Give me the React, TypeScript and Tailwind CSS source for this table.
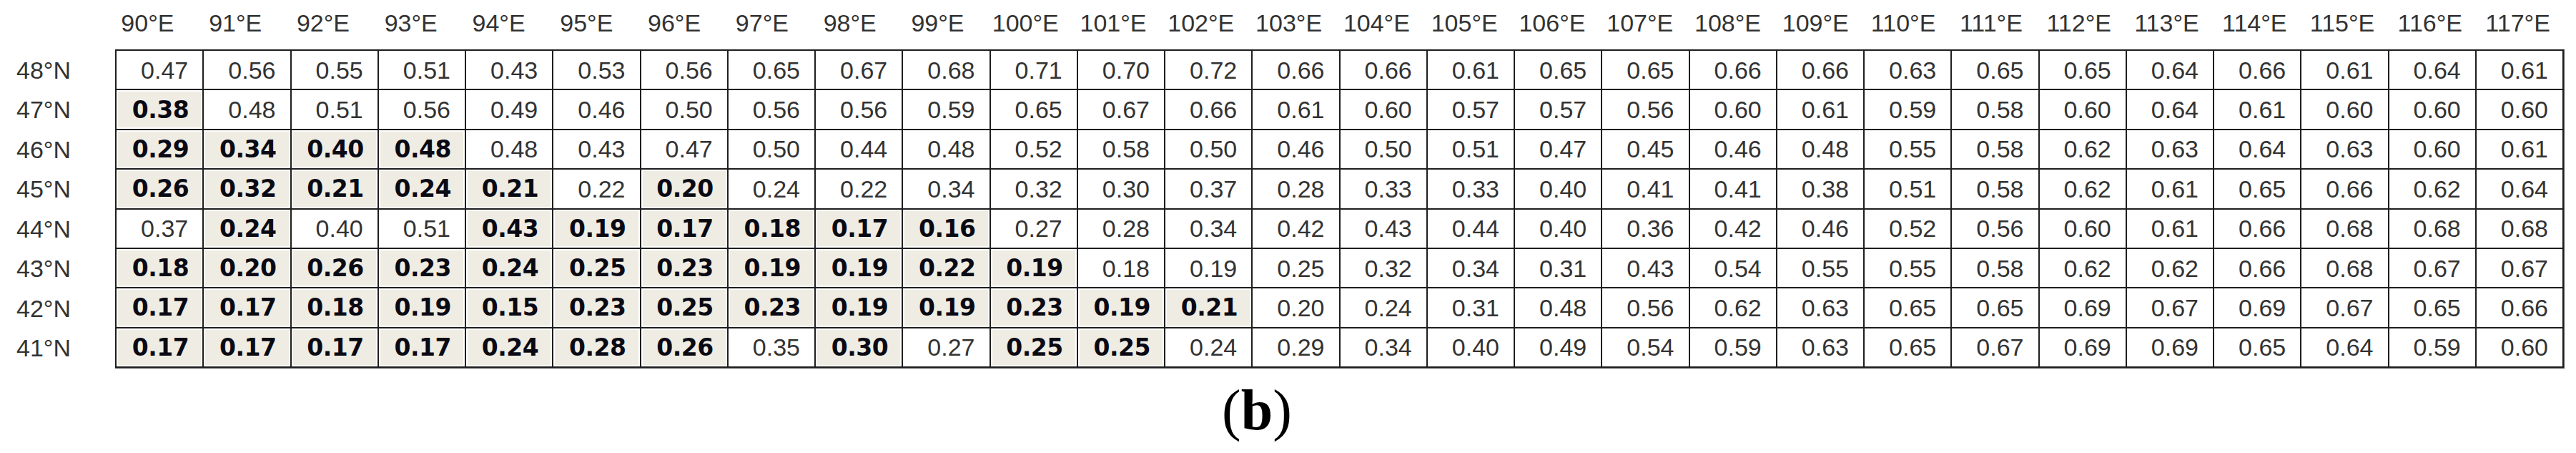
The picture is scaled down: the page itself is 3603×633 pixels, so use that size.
import React from "react";

type Cell = [string, boolean];

const cols = Array.from({ length: 28 }, (_, i) => `${90 + i}°E`);

const raw: { label: string; vals: string; hi: number[] }[] = [
  {
    label: "48°N",
    vals: "0.47 0.56 0.55 0.51 0.43 0.53 0.56 0.65 0.67 0.68 0.71 0.70 0.72 0.66 0.66 0.61 0.65 0.65 0.66 0.66 0.63 0.65 0.65 0.64 0.66 0.61 0.64 0.61",
    hi: [],
  },
  {
    label: "47°N",
    vals: "0.38 0.48 0.51 0.56 0.49 0.46 0.50 0.56 0.56 0.59 0.65 0.67 0.66 0.61 0.60 0.57 0.57 0.56 0.60 0.61 0.59 0.58 0.60 0.64 0.61 0.60 0.60 0.60",
    hi: [0],
  },
  {
    label: "46°N",
    vals: "0.29 0.34 0.40 0.48 0.48 0.43 0.47 0.50 0.44 0.48 0.52 0.58 0.50 0.46 0.50 0.51 0.47 0.45 0.46 0.48 0.55 0.58 0.62 0.63 0.64 0.63 0.60 0.61",
    hi: [0, 1, 2, 3],
  },
  {
    label: "45°N",
    vals: "0.26 0.32 0.21 0.24 0.21 0.22 0.20 0.24 0.22 0.34 0.32 0.30 0.37 0.28 0.33 0.33 0.40 0.41 0.41 0.38 0.51 0.58 0.62 0.61 0.65 0.66 0.62 0.64",
    hi: [0, 1, 2, 3, 4, 6],
  },
  {
    label: "44°N",
    vals: "0.37 0.24 0.40 0.51 0.43 0.19 0.17 0.18 0.17 0.16 0.27 0.28 0.34 0.42 0.43 0.44 0.40 0.36 0.42 0.46 0.52 0.56 0.60 0.61 0.66 0.68 0.68 0.68",
    hi: [1, 4, 5, 6, 7, 8, 9],
  },
  {
    label: "43°N",
    vals: "0.18 0.20 0.26 0.23 0.24 0.25 0.23 0.19 0.19 0.22 0.19 0.18 0.19 0.25 0.32 0.34 0.31 0.43 0.54 0.55 0.55 0.58 0.62 0.62 0.66 0.68 0.67 0.67",
    hi: [0, 1, 2, 3, 4, 5, 6, 7, 8, 9, 10],
  },
  {
    label: "42°N",
    vals: "0.17 0.17 0.18 0.19 0.15 0.23 0.25 0.23 0.19 0.19 0.23 0.19 0.21 0.20 0.24 0.31 0.48 0.56 0.62 0.63 0.65 0.65 0.69 0.67 0.69 0.67 0.65 0.66",
    hi: [0, 1, 2, 3, 4, 5, 6, 7, 8, 9, 10, 11, 12],
  },
  {
    label: "41°N",
    vals: "0.17 0.17 0.17 0.17 0.24 0.28 0.26 0.35 0.30 0.27 0.25 0.25 0.24 0.29 0.34 0.40 0.49 0.54 0.59 0.63 0.65 0.67 0.69 0.69 0.65 0.64 0.59 0.60",
    hi: [0, 1, 2, 3, 4, 5, 6, 8, 10, 11],
  },
];

const rows = raw.map((r) => ({
  label: r.label,
  cells: r.vals.split(" ").map((v, i) => [v, r.hi.includes(i)] as Cell),
}));

export default function App() {
  return (
    <div className="w-[3603px] h-[633px] bg-white flex flex-col overflow-hidden font-['Liberation_Sans',Arial,sans-serif]">
      {/* header */}
      <div className="h-[69px] pl-[145px]">
        <div className="w-[3438px] grid grid-cols-[repeat(28,minmax(0,1fr))] pt-[15px]">
          {cols.map((c) => (
            <div key={c} className="text-center text-[34px] leading-[34px] text-[#333333]">
              {c}
            </div>
          ))}
        </div>
      </div>

      {/* body */}
      <div className="flex h-[446px]">
        <div className="w-[161px] grid grid-rows-[repeat(8,minmax(0,1fr))] gap-[2px] py-[2px]">
          {rows.map((r) => (
            <div key={r.label} className="flex items-center pl-[23px] text-[34px] leading-none text-[#333333]">
              {r.label}
            </div>
          ))}
        </div>
        <div className="w-[3426px] h-[446px] bg-[#1e1e1e] p-[2px] border-b-[1px] border-r-[1px] border-[#555555] grid grid-cols-[repeat(28,minmax(0,1fr))] grid-rows-[repeat(8,minmax(0,1fr))] gap-[2px]">
          {rows.map((r) =>
            r.cells.map(([v, hi], i) =>
              hi ? (
                <div key={r.label + i} className="bg-white p-[2px]">
                  <div className="h-full bg-[#efece3] flex items-center justify-end pr-[17px] font-['DejaVu_Sans',Verdana,sans-serif] font-bold text-[33px] tracking-[-0.5px] leading-none text-[#0a0a14]">
                    {v}
                  </div>
                </div>
              ) : (
                <div
                  key={r.label + i}
                  className="bg-white flex items-center justify-end pr-[20px] text-[34px] leading-none text-[#333333]"
                >
                  {v}
                </div>
              )
            )
          )}
        </div>
      </div>

      {/* caption */}
      <div className="pl-[1709px] pt-[18px]">
        <span className="font-['Liberation_Serif','Times_New_Roman',serif] text-[80px] leading-[80px] text-black">
          (<span className="font-bold">b</span>)
        </span>
      </div>
    </div>
  );
}
